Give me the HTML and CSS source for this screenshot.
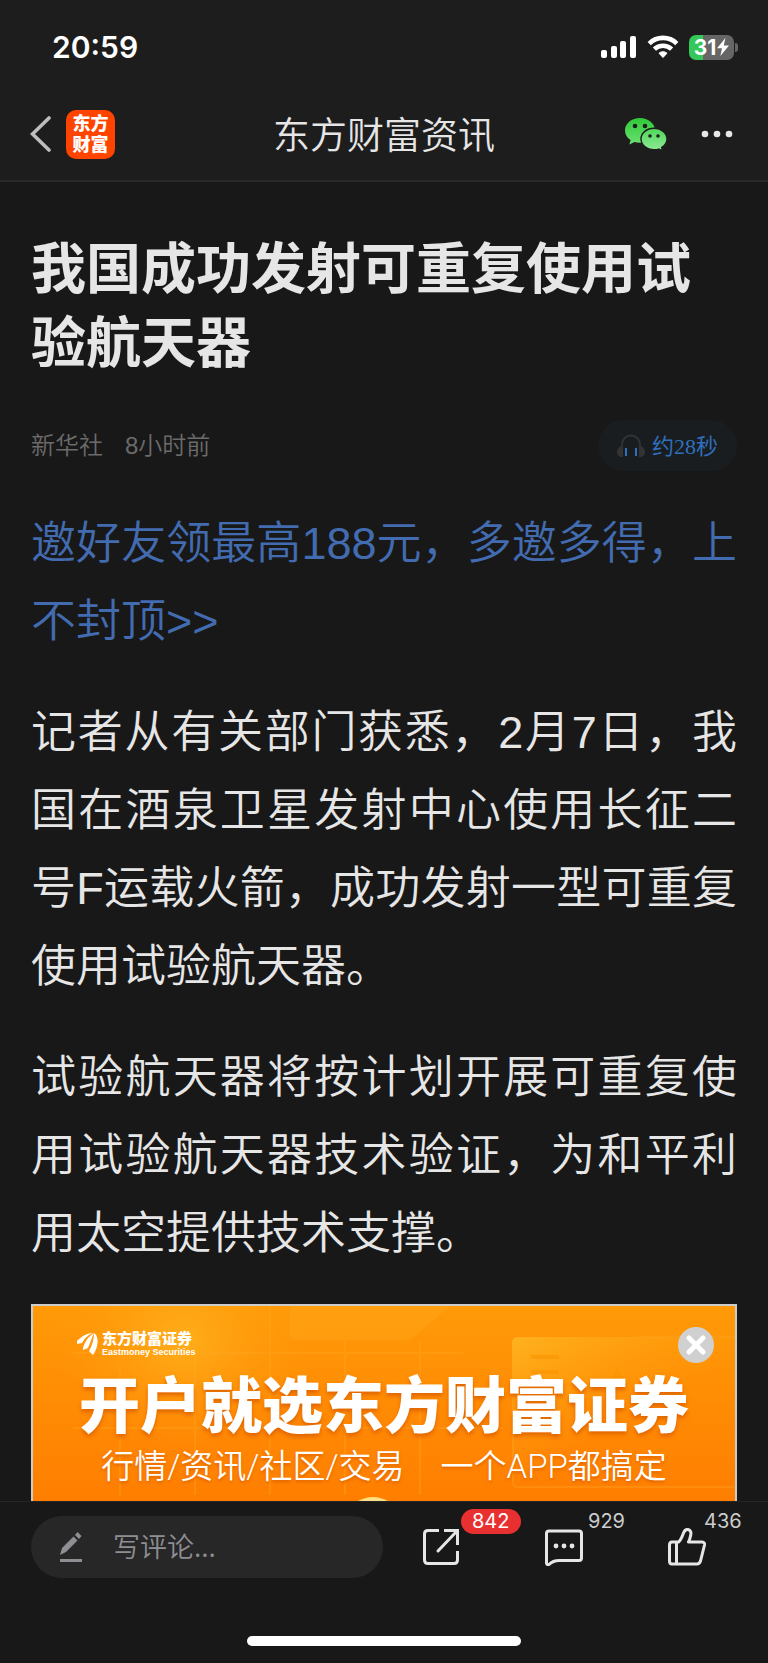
FILE: index.html
```
<!DOCTYPE html>
<html lang="zh-CN">

<head>
    <meta charset="UTF-8">
    <meta name="viewport" content="width=device-width, initial-scale=1">
    <title>东方财富资讯</title>
    <link rel="stylesheet" href="styles.css">
</head>

<body>
    <div class="status">
        <span class="time">20:59</span>
        <div class="status-icons">
            <svg width="36" height="23" viewBox="0 0 36 23" fill="#fff">
                <rect x="0" y="14" width="6" height="8" rx="2" />
                <rect x="10" y="10" width="6" height="12" rx="2" />
                <rect x="19" y="5" width="6" height="17" rx="2" />
                <rect x="29" y="0" width="6" height="22" rx="2" />
            </svg>
            <svg width="32" height="24" viewBox="0 0 32 24" fill="none" stroke="#fff" stroke-width="4.6">
                <path d="M2.2 8.6a19.6 19.6 0 0 1 27.6 0" />
                <path d="M7.4 14.2a12.4 12.4 0 0 1 17.2 0" />
                <path d="M16 22.5l-4-4.3a6 6 0 0 1 8 0z" fill="#fff" stroke="#fff" stroke-width="1" />
            </svg>
            <div class="battery">
                <span>31</span>
                <svg width="12" height="18" viewBox="0 0 12 18" fill="#fff">
                    <path d="M8.4 0L0 10.2h5L3.4 18 12 7.4H6.8z" />
                </svg>
            </div>
        </div>
    </div>

    <header>
        <div class="header-left">
            <a href="#" class="back" aria-label="返回">
                <svg width="22" height="36" viewBox="0 0 22 36" fill="none" stroke="#bdbdbd" stroke-width="3.6" stroke-linecap="round">
                    <path d="M19 2L2.5 18 19 34" />
                </svg>
            </a>
            <a href="#" class="app-logo">东方<br>财富</a>
        </div>
        <h2>东方财富资讯</h2>
        <div class="header-right">
            <button aria-label="微信">
                <svg width="42" height="33" viewBox="0 0 42 33">
                    <defs>
                        <linearGradient id="green1" x1="0" y1="0" x2="0" y2="1">
                            <stop offset="0" stop-color="#2fc939" />
                            <stop offset="1" stop-color="#6be072" />
                        </linearGradient>
                        <linearGradient id="green2" x1="0" y1="0" x2="0" y2="1">
                            <stop offset="0" stop-color="#4fd659" />
                            <stop offset="1" stop-color="#91ea97" />
                        </linearGradient>
                    </defs>
                    <path fill="url(#green1)" d="M15 0C6.700 0 0 5.500 0 12.400c0 4 2.200 7.400 5.600 9.600l-1.200 4.400 5-2.500c1.800.5 3.700.8 5.600.8 8.300 0 15-5.500 15-12.300S23.300 0 15 0z" />
                    <circle cx="10" cy="8" r="2.300" fill="#1d1d1d" />
                    <circle cx="20" cy="8" r="2.300" fill="#1d1d1d" />
                    <path fill="url(#green2)" stroke="#1d1d1d" stroke-width="1.400" d="M29 10.200c-7.200 0-13 4.800-13 10.800s5.800 10.800 13 10.800c1.700 0 3.300-.2 4.800-.7l3.800 1.900-.9-3.600C39.900 27.400 42 24.400 42 21c0-6-5.800-10.800-13-10.800z" />
                    <circle cx="25" cy="18" r="1.800" fill="#1d1d1d" />
                    <circle cx="33" cy="18" r="1.800" fill="#1d1d1d" />
                </svg>
            </button>
            <button aria-label="更多">
                <svg width="32" height="8" viewBox="0 0 32 8" fill="#e8e8e8">
                    <circle cx="4" cy="4" r="3.300" />
                    <circle cx="16" cy="4" r="3.300" />
                    <circle cx="28" cy="4" r="3.300" />
                </svg>
            </button>
        </div>
    </header>

    <main>
        <h1>我国成功发射可重复使用试验航天器</h1>
        <div class="meta">
            <span>新华社</span>
            <span>8小时前</span>
            <button class="listen">
                <svg width="28" height="24" viewBox="0 0 28 24">
                    <path d="M5 14V10.500a9 9 0 0 1 18 0V14" fill="none" stroke="#333" stroke-width="1.800" />
                    <path d="M6 12v11C2.500 23.600 0 21 0 17.800S2.500 12 6 12zM22 12v11c3.500.6 6-2 6-5.200S25.500 12 22 12z" fill="#333" />
                    <rect x="8" y="14" width="2" height="8" fill="#2f6fbd" />
                    <rect x="18" y="14" width="2" height="8" fill="#2f6fbd" />
                </svg>
                <span>约28秒</span>
            </button>
        </div>

        <p><a href="#">邀好友领最高188元，多邀多得，上不封顶&gt;&gt;</a></p>
        <p>记者从有关部门获悉，2月7日，我国在酒泉卫星发射中心使用长征二号F运载火箭，成功发射一型可重复使用试验航天器。</p>
        <p>试验航天器将按计划开展可重复使用试验航天器技术验证，为和平利用太空提供技术支撑。</p>

        <div class="banner">
            <svg class="banner-bg" viewBox="0 0 702 260" preserveAspectRatio="xMinYMin slice">
                <defs>
                    <linearGradient id="shine" x1="0" y1="0" x2="1" y2="1">
                        <stop offset="0" stop-color="#ffb521" stop-opacity=".9" />
                        <stop offset=".5" stop-color="#ffa010" stop-opacity="0" />
                    </linearGradient>
                    <radialGradient id="glow">
                        <stop offset="0" stop-color="#ffb420" stop-opacity=".8" />
                        <stop offset="1" stop-color="#ff9a0c" stop-opacity="0" />
                    </radialGradient>
                </defs>
                <ellipse cx="150" cy="35" rx="130" ry="110" fill="url(#glow)" />
                <path d="M257 0h160l-40 34H262q-5 0-5-5z" fill="#ffb326" opacity=".25" />
                <g stroke="#ffab25" stroke-width="2" opacity=".3">
                    <path d="M87 60V189M162 47V189M237 0V189M312 34V189M387 34V189M40 47H430M40 122H470" />
                </g>
                <rect x="479" y="31" width="260" height="151" rx="5" fill="url(#shine)" />
                <path d="M480 120v56q0 5 5 5h217M600 31h102" fill="none" stroke="#ffa526" stroke-width="2" opacity=".35" />
                <path d="M498 49h28v4h-28zM498 64h28v4h-28zM576 76l8-14 8 14z" fill="#f99400" opacity=".6" />
                <circle cx="340" cy="220" r="29" fill="#ffe084" />
            </svg>
            <div class="broker">
                <svg width="21" height="24" viewBox="0 0 21 24" fill="#fff">
                    <path d="M0 9C5 4 10 1 16 1c-3 1-8 4-11 10L0 12z" />
                    <path d="M6 16C8 9 12 4 17 1c-2 4-3 8-6 15l-5 2z" />
                    <path d="M12 19c3-5 5-11 5-18 5 3 5 13-1 22z" />
                </svg>
                <div>
                    <strong>东方财富证券</strong>
                    <small>Eastmoney Securities</small>
                </div>
            </div>
            <h3>开户就选东方财富证券</h3>
            <div class="slogan">
                <span>行情/资讯/社区/交易</span>
                <span>一个APP都搞定</span>
            </div>
            <button class="close" aria-label="关闭">
                <svg width="20" height="20" viewBox="0 0 20 20" stroke="#fff" stroke-width="5" stroke-linecap="round">
                    <path d="M3 3l14 14M17 3L3 17" />
                </svg>
            </button>
        </div>
    </main>

    <footer>
        <div class="toolbar">
            <label class="comment">
                <svg width="22" height="30" viewBox="0 0 22 30" fill="#8e8e93">
                    <path d="M0 23l2-7L13.500 4.500l4 4L6 20z" />
                    <path d="M15 3l2.500-3 4 4L19 7z" />
                    <rect y="27" width="22" height="3" />
                </svg>
                <input type="text" placeholder="写评论..." aria-label="写评论">
            </label>
            <div class="actions">
                <button aria-label="分享">
                    <svg width="38" height="38" viewBox="0 0 38 38" fill="none" stroke="#e6e6e6" stroke-width="3">
                        <path d="M17 2.500H6Q2.500 2.500 2.500 6V32Q2.500 35.500 6 35.500H32Q35.500 35.500 35.500 32V23" />
                        <path d="M22 2.500H35.500V17" />
                        <path d="M35 3L16 23" stroke-linecap="round" />
                    </svg>
                    <span class="count red">842</span>
                </button>
                <button aria-label="评论">
                    <svg width="38" height="38" viewBox="0 0 38 38" fill="none" stroke="#e6e6e6" stroke-width="3" stroke-linejoin="round">
                        <path d="M4 3H34Q36.500 3 36.500 5.500V30Q36.500 32.500 34 32.500H14Q8 32.500 4 36.500Q1.500 37 1.500 35V5.500Q1.500 3 4 3z" />
                        <g fill="#e6e6e6" stroke="none">
                            <circle cx="11" cy="18" r="2.400" />
                            <circle cx="19" cy="18" r="2.400" />
                            <circle cx="27" cy="18" r="2.400" />
                        </g>
                    </svg>
                    <span class="count">929</span>
                </button>
                <button class="like" aria-label="点赞">
                    <svg width="38" height="38" viewBox="0 0 38 38" fill="none" stroke="#e6e6e6" stroke-width="3" stroke-linejoin="round">
                        <path d="M4 14H10.500Q13 12 15.500 5Q17 1 20 1.500Q24 2.500 22.500 8Q22 11 20.500 14H33.500Q37 14 36.500 17L32.500 33Q31.500 36 29 36H4Q1.500 36 1.500 33V17Q1.500 14 4 14z" />
                        <path d="M8.500 14V36" />
                    </svg>
                    <span class="count">436</span>
                </button>
            </div>
        </div>
        <div class="home-bar"></div>
    </footer>
</body>

</html>
```
FILE: styles.css
```
* {
    box-sizing: border-box;
}

body {
    margin: 0;
    height: 100vh;
    display: flex;
    flex-direction: column;
    overflow: hidden;
    background-color: #181818;
    color: #e6e6e6;
    font-family: "Liberation Sans", "Noto Sans CJK SC", sans-serif;
}

svg {
    display: block;
    flex: none;
}

h1,
h2,
h3,
p {
    margin: 0;
}

a {
    color: #426bb0;
    text-decoration: none;
}

button {
    padding: 0;
    border: 0;
    background: none;
    color: inherit;
    font-family: inherit;
    cursor: pointer;
}

/* status bar */
.status {
    flex: none;
    height: 92px;
    padding: 2px 30px 0 52px;
    display: flex;
    align-items: center;
    justify-content: space-between;
    background-color: #1d1d1d;
    color: #fff;
    font-family: Inter, sans-serif;
}

.time {
    font-size: 30px;
    font-weight: 600;
}

.status-icons {
    display: flex;
    align-items: center;
    gap: 10px;
}

.battery {
    position: relative;
    width: 45px;
    height: 25px;
    margin-right: 4px;
    border-radius: 7px;
    background: linear-gradient(90deg, #34c759 14px, #666 14px);
    display: flex;
    align-items: center;
    justify-content: center;
    gap: 1px;
    font-size: 21px;
    font-weight: 700;
}

.battery::after {
    content: "";
    position: absolute;
    right: -4px;
    top: 8px;
    width: 3px;
    height: 9px;
    border-radius: 0 4px 4px 0;
    background-color: #666;
}

/* header */
header {
    flex: none;
    height: 90px;
    padding: 0 30px 4px;
    border-bottom: 2px solid #282828;
    background-color: #1d1d1d;
    display: grid;
    grid-template-columns: 1fr auto 1fr;
    align-items: center;
}

header h2 {
    margin-top: 6px;
    font-size: 37px;
    font-weight: 350;
    line-height: 48px;
}

.header-left,
.header-right {
    display: flex;
    align-items: center;
}

.header-left {
    gap: 14px;
}

.header-right {
    margin-right: 5px;
    justify-content: flex-end;
    gap: 34px;
}

.app-logo {
    width: 49px;
    height: 49px;
    padding-top: 4px;
    border-radius: 10px;
    background-color: #ff4400;
    color: #fff;
    font-size: 18px;
    font-weight: 900;
    line-height: 21px;
    text-align: center;
}

/* article */
main {
    flex: 1;
    min-height: 0;
    padding: 50px 31px 0;
    overflow-y: auto;
    scrollbar-width: none;
}

h1 {
    font-size: 55px;
    font-weight: 700;
    line-height: 74px;
}

.meta {
    margin: 40px 0 34px;
    display: flex;
    align-items: center;
    gap: 22px;
    color: #6b6b6b;
    font-size: 24px;
    font-weight: 350;
}

.meta span {
    padding-bottom: 4px;
}

.listen {
    margin-left: auto;
    height: 51px;
    padding: 0 19px;
    border-radius: 26px;
    background-color: #191d20;
    display: flex;
    align-items: center;
    gap: 7px;
    color: #2f6fbd;
    font-family: "Liberation Serif", "Noto Sans CJK SC", serif;
    font-size: 22px;
}

p {
    margin-bottom: 33px;
    font-size: 45px;
    font-weight: 350;
    line-height: 78px;
    text-align: justify;
}

p:last-of-type {
    margin-bottom: 31px;
}

/* ad */
.banner {
    position: relative;
    height: 260px;
    padding: 24px 44px;
    border: 2px solid #ccc;
    overflow: hidden;
    background: linear-gradient(#ff9a08, #ff7d00 200px);
    color: #fff;
}

.banner-bg {
    position: absolute;
    left: 0;
    top: 0;
    width: 100%;
    height: 100%;
}

.broker,
.banner h3,
.slogan {
    position: relative;
}

.broker {
    display: flex;
    align-items: center;
    gap: 4px;
}

.broker strong,
.broker small {
    display: block;
}

.broker strong {
    font-size: 15px;
    font-weight: 900;
    line-height: 17px;
}

.broker small {
    font-size: 9px;
    font-weight: 700;
    line-height: 11px;
}

.banner h3 {
    margin-top: 14px;
    font-family: "Noto Sans CJK SC", sans-serif;
    font-size: 61px;
    font-weight: 900;
    line-height: 60px;
    text-align: center;
    white-space: nowrap;
    text-shadow: 0 3px 4px #e06500;
}

.slogan {
    margin-top: 15px;
    display: flex;
    justify-content: center;
    gap: 36px;
    font-family: Roboto, "Noto Sans CJK SC", sans-serif;
    font-size: 33px;
    font-weight: 350;
    line-height: 40px;
    white-space: nowrap;
    text-shadow: 0 2px 3px #e06500;
}

.close {
    position: absolute;
    right: 21px;
    top: 21px;
    width: 36px;
    height: 36px;
    border-radius: 50%;
    background-color: #d0d0d0;
    display: flex;
    align-items: center;
    justify-content: center;
}

/* bottom bar */
footer {
    flex: none;
    padding-bottom: 17px;
    border-top: 1px solid #262626;
}

.toolbar {
    padding: 14px 62px 0 31px;
    display: grid;
    grid-template-columns: minmax(0, 352fr) minmax(0, 323fr);
}

.comment {
    height: 62px;
    padding: 0 29px;
    border-radius: 31px;
    background-color: #272727;
    display: flex;
    align-items: center;
    gap: 31px;
}

.comment input {
    flex: 1;
    min-width: 0;
    padding: 0 0 4px;
    border: 0;
    outline: 0;
    background: none;
    color: #e6e6e6;
    font-family: "Noto Sans CJK SC", sans-serif;
    font-size: 27px;
    font-weight: 350;
}

.comment input::placeholder {
    color: #8e8e93;
}

.actions {
    padding-left: 39px;
    display: flex;
    align-items: center;
    justify-content: space-between;
}

.actions button {
    position: relative;
}

.count {
    position: absolute;
    left: 43px;
    bottom: 32px;
    color: #ccc;
    font-family: Inter, sans-serif;
    font-size: 20px;
    line-height: 25px;
}

.like .count {
    left: 36px;
}

.count.red {
    left: 39px;
    padding: 0 11px;
    border-radius: 13px;
    background-color: #e93030;
    color: #fff;
}

.home-bar {
    width: 274px;
    height: 10px;
    margin: 58px auto 0;
    border-radius: 5px;
    background-color: #fff;
}
```
